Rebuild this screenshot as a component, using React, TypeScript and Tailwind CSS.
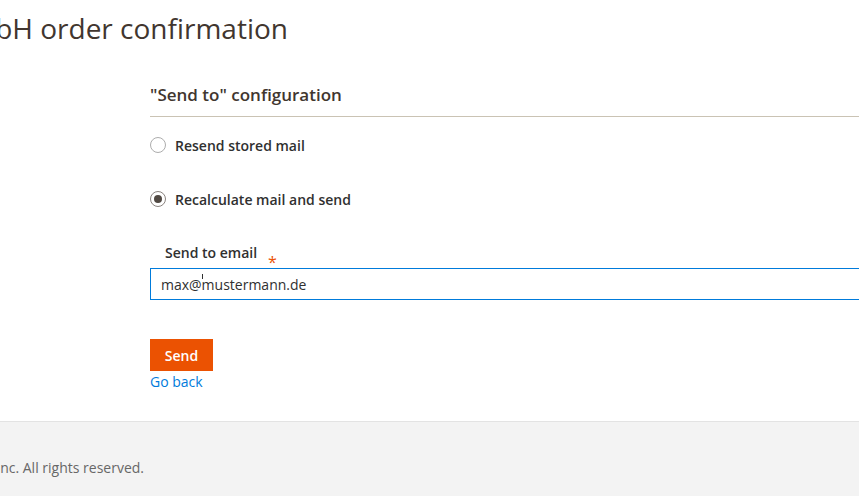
import * as React from "react";

const font = "font-['Open_Sans',sans-serif]";

const Radio: React.FC<{ checked?: boolean; label: string }> = ({ checked, label }) => (
    <label className="flex h-[20px] items-center gap-[9px]">
        <span
            className={`flex h-[16px] w-[16px] items-center justify-center rounded-full border bg-white ${
                checked ? "border-[#8a837f]" : "border-[#adadad]"
            }`}
        >
            {checked && <span className="h-[8px] w-[8px] rounded-full bg-[#514943]" />}
        </span>
        <span className="text-[14px] font-semibold text-[#303030]">{label}</span>
    </label>
);

const App: React.FC = () => {
    return (
        <div className={`flex min-h-[496px] flex-col overflow-hidden bg-white ${font}`}>
            <div className="flex w-[288px] justify-end whitespace-nowrap pt-[10px]">
                <h1 className="text-[28px] leading-[36px] font-normal text-[#41362f]">
                    Resend GmbH order confirmation
                </h1>
            </div>

            <div className="ml-[150px] flex w-[760px] flex-col">
                <div className="mt-[37px] border-b border-[#cac3b4] pb-[9px]">
                    <h2 className="text-[17px] leading-[24px] font-semibold text-[#41362f]">
                        "Send to" configuration
                    </h2>
                </div>

                <div className="mt-[18px] flex flex-col gap-[34px]">
                    <Radio label="Resend stored mail" />
                    <Radio checked label="Recalculate mail and send" />
                </div>

                <div className="mt-[33px] flex h-[20px] items-center pl-[15px]">
                    <span className="text-[14px] font-semibold text-[#303030]">Send to email</span>
                    <span className="relative top-[10px] ml-[11px] text-[16px] leading-none text-[#eb5202]">
                        *
                    </span>
                </div>

                <div className="relative mt-[6px]">
                    <input
                        className="h-[32px] w-full border border-[#007bdb] px-[10px] text-[14px] text-[#303030] outline-none"
                        defaultValue="max@mustermann.de"
                    />
                    <span className="absolute top-[6px] left-[52px] h-[5px] w-px bg-[#303030]" />
                </div>

                <div className="mt-[39px]">
                    <button className="h-[32px] w-[63px] bg-[#eb5202] text-[14px] font-semibold text-white">
                        Send
                    </button>
                </div>
                <a className="mt-px text-[14px] leading-[20px] text-[#007bdb]" href="#">
                    Go back
                </a>
            </div>

            <footer className="mt-[29px] flex-1 border-t border-[#e3e3e3] bg-[#f3f3f3] pt-[36px]">
                <div className="flex w-[144px] justify-end whitespace-nowrap">
                    <span className="text-[14px] leading-[20px] text-[#676767]">
                        Copyright © 2024 Magento Commerce Inc. All rights reserved.
                    </span>
                </div>
            </footer>
        </div>
    );
};

export default App;
